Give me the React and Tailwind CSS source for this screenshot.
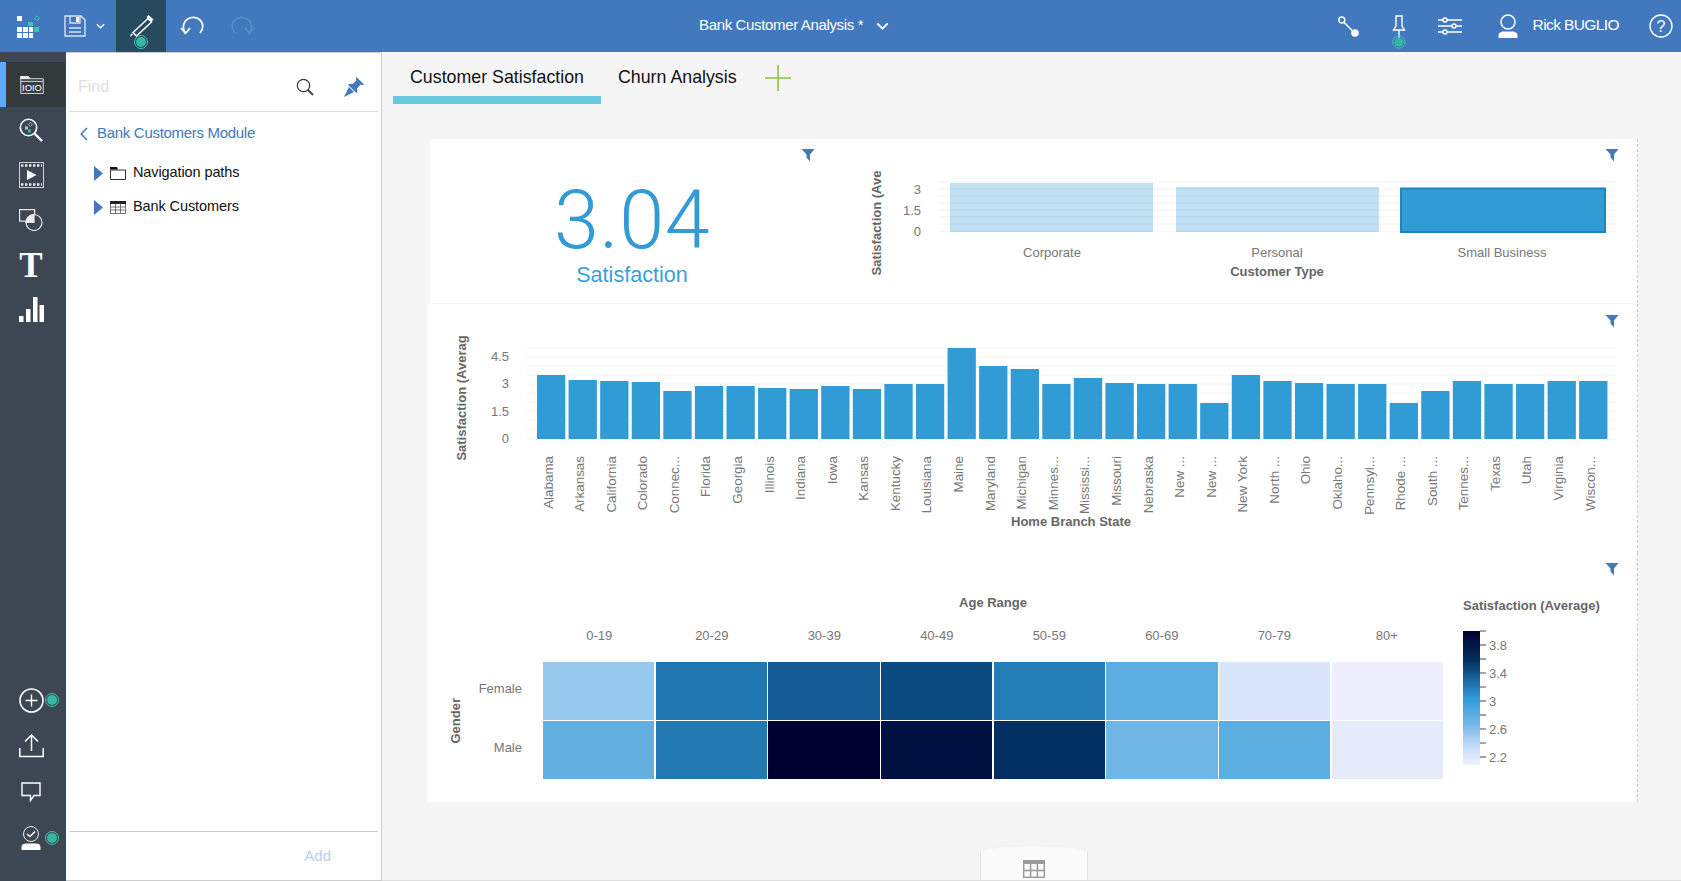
import React from "react";

const states = [
  ["Alabama", 195], ["Arkansas", 210], ["California", 213], ["Colorado", 216], ["Connec...", 243],
  ["Florida", 228], ["Georgia", 228], ["Illinois", 234], ["Indiana", 237], ["Iowa", 228],
  ["Kansas", 237], ["Kentucky", 222], ["Louisiana", 222], ["Maine", 114], ["Maryland", 168],
  ["Michigan", 177], ["Minnes...", 222], ["Mississi...", 204], ["Missouri", 219], ["Nebraska", 222],
  ["New ...", 222], ["New ...", 279], ["New York", 195], ["North ...", 213], ["Ohio", 219],
  ["Oklaho...", 222], ["Pennsyl...", 222], ["Rhode ...", 279], ["South ...", 243], ["Tennes...", 213],
  ["Texas", 222], ["Utah", 222], ["Virginia", 213], ["Wiscon...", 213],
];

const ages = ["0-19", "20-29", "30-39", "40-49", "50-59", "60-69", "70-79", "80+"];
const female = ["#97c9ee", "#2076b0", "#145c93", "#0b4a80", "#247db7", "#5caee0", "#d8e5fa", "#eeeefd"];
const male = ["#63afe0", "#2279b2", "#000030", "#001040", "#012f62", "#6fb6e4", "#5cade0", "#e6ebfc"];

function Dot({ cx = 9, cy = 9 }) {
  return (
    <g>
      <circle cx={cx} cy={cy} r="6.5" fill="none" stroke="#3fc4ad" strokeWidth="1" />
      <circle cx={cx} cy={cy} r="5" fill="#36b7a4" />
    </g>
  );
}

function Filter({ className }) {
  return (
    <svg className={`absolute ${className}`} width="14" height="14" viewBox="0 0 14 14">
      <path d="M0.5 1H13.5L9 6.5V13.5L5.5 9.5V6.5Z" fill="#4178be" />
    </svg>
  );
}

function Logo() {
  return (
    <svg width="23" height="23" viewBox="17 15 23 23">
      <g fill="#fff">
        <rect x="17" y="16" width="5" height="5" />
        <rect x="17" y="27" width="5" height="5" />
        <rect x="23" y="27" width="5" height="5" />
        <rect x="29" y="27" width="4" height="5" />
        <rect x="17" y="33" width="5" height="5" />
        <rect x="23" y="33" width="5" height="5" />
        <rect x="29" y="33" width="4" height="5" />
      </g>
      <rect x="28" y="22" width="5" height="4" fill="#3ec6ad" />
      <rect x="34" y="27" width="5" height="5" fill="#3ec6ad" />
      <path d="M37 15.8L39.4 18.2L37 20.6L34.6 18.2Z" fill="none" stroke="#3ec6ad" />
    </svg>
  );
}

function SaveIcon() {
  return (
    <svg width="22" height="22" viewBox="0 0 22 22" fill="none" stroke="#d7e3f3" strokeWidth="1.4">
      <path d="M1 1H17L21 5V21H1Z" />
      <path d="M6 1V8H16V1" />
      <rect x="12" y="2" width="3" height="5" fill="#fff" stroke="none" />
      <path d="M5 13H17M5 17H17" />
    </svg>
  );
}

function Chevron({ w = 9, h = 6, sw = 1.5 }) {
  return (
    <svg width={w} height={h} viewBox="0 0 10 6" fill="none" stroke="#fff" strokeWidth={sw}>
      <path d="M1 1L5 5L9 1" />
    </svg>
  );
}

function PencilTile() {
  return (
    <svg width="50" height="52" viewBox="0 0 50 52" fill="none">
      <path d="M17 32.5L32 18.5L35.5 22L20.5 36Z" stroke="#fff" strokeWidth="1.5" />
      <path d="M32.5 15L37.5 19.5L35.5 21.5L30.5 17Z" fill="#fff" />
      <path d="M17 34.5L14 37L15 33.5Z" fill="#fff" />
      <Dot cx={25} cy={42} />
    </svg>
  );
}

function Undo({ color = "#fff", flip }) {
  return (
    <svg width="24" height="20" viewBox="0 0 24 20" fill="none" stroke={color} strokeWidth="1.7" className={flip ? "-scale-x-100" : ""}>
      <path d="M5.5 17C3 13.5 3 9 5 5.5C8 1 15 0 19.5 3.5C24 7.5 23.5 13 20 17" />
      <path d="M1 12L5.5 17.5L10 12" />
    </svg>
  );
}

function ConnectionIcon() {
  return (
    <svg width="21" height="21" viewBox="0 0 21 21" fill="none" stroke="#fff" strokeWidth="1.5">
      <circle cx="3.8" cy="4" r="3" />
      <path d="M6 6.2L15 15.5" />
      <circle cx="17" cy="17" r="3.8" fill="#fff" stroke="none" />
    </svg>
  );
}

function PinIcon() {
  return (
    <svg width="14" height="36" viewBox="0 0 14 36" fill="none">
      <path d="M4 1H10V11L12.5 15H1.5L4 11Z" stroke="#fff" strokeWidth="1.4" />
      <path d="M7 15V25" stroke="#fff" strokeWidth="1.4" />
      <circle cx="7" cy="27" r="6.2" stroke="#3fc4ad" />
      <circle cx="7" cy="27" r="4.6" fill="#36b7a4" />
    </svg>
  );
}

function SlidersIcon() {
  return (
    <svg width="24" height="18" viewBox="0 0 24 18" fill="none" stroke="#fff" strokeWidth="1.5">
      <path d="M0 3H5M9 3H24M0 9H14M18 9H24M0 15H5M9 15H24" />
      <circle cx="7" cy="3" r="2" />
      <circle cx="16" cy="9" r="2" />
      <circle cx="7" cy="15" r="2" />
    </svg>
  );
}

function UserIcon() {
  return (
    <svg width="20" height="24" viewBox="0 0 20 24">
      <circle cx="10" cy="8" r="7" fill="none" stroke="#fff" strokeWidth="1.5" />
      <path d="M0.5 24V21.5C0.5 18.5 3 17.5 5.5 17.5H14.5C17 17.5 19.5 18.5 19.5 21.5V24Z" fill="#fff" />
    </svg>
  );
}

function HelpIcon() {
  return (
    <svg width="24" height="24" viewBox="0 0 24 24">
      <circle cx="12" cy="12" r="11" fill="none" stroke="#fff" strokeWidth="1.4" />
      <text x="12" y="17.5" textAnchor="middle" fontSize="16" fill="#fff">?</text>
    </svg>
  );
}

function DataIcon() {
  return (
    <svg width="24" height="18" viewBox="0 0 26 20" fill="none" stroke="#e4e7ea">
      <path d="M0.5 5V0.5H9L10.5 3H25.5V19.5H0.5Z" fill="#3a4145" />
      <path d="M0.5 0.5H9L10.5 3H0.5Z" fill="#fff" />
      <path d="M0.5 6H25.5" />
      <text x="13" y="16.5" textAnchor="middle" fontSize="10.5" fill="#fff" stroke="none">IOIO</text>
    </svg>
  );
}

function SearchDots() {
  return (
    <svg width="24" height="24" viewBox="0 0 24 24" fill="none">
      <circle cx="9.5" cy="9.5" r="8.2" stroke="#fff" strokeWidth="1.6" />
      <path d="M15.5 15.5L23 23" stroke="#fff" strokeWidth="2.4" />
      <rect x="6" y="8.5" width="3" height="3" fill="#bcc4cb" />
      <rect x="9" y="11.5" width="3" height="3" fill="#36b7a4" />
      <path d="M11.5 4.5L13.5 6.5L11.5 8.5L9.5 6.5Z" stroke="#bcc4cb" strokeWidth="0.8" />
    </svg>
  );
}

function FilmIcon() {
  return (
    <svg width="25" height="26" viewBox="0 0 25 26" fill="none">
      <rect x="0.5" y="0.5" width="24" height="25" stroke="#cfd3d7" />
      <path d="M2 3.5H23M2 22.5H23" stroke="#e8eaec" strokeWidth="2.4" strokeDasharray="2.4 1.6" />
      <path d="M8 8L17.5 13L8 18Z" fill="#fff" />
    </svg>
  );
}

function WidgetIcon() {
  return (
    <svg width="24" height="22" viewBox="0 0 24 22" fill="none" stroke="#e8eaec" strokeWidth="1.2">
      <rect x="0.6" y="0.6" width="15" height="11.5" />
      <circle cx="15" cy="13.5" r="8" fill="#3d4753" />
      <path d="M15 5.5V13.5H7A8 8 0 0 1 15 5.5Z" fill="#e8eaec" />
    </svg>
  );
}

function BarsIcon() {
  return (
    <svg width="25" height="25" viewBox="0 0 25 25" fill="#fff">
      <rect x="0" y="19" width="4.5" height="6" />
      <rect x="7" y="12" width="4.5" height="13" />
      <rect x="14" y="0" width="4.5" height="25" />
      <rect x="20.5" y="8" width="4.5" height="17" />
    </svg>
  );
}

function AddIcon() {
  return (
    <svg width="25" height="25" viewBox="0 0 25 25" fill="none" stroke="#fff">
      <circle cx="12.5" cy="12.5" r="11.5" strokeWidth="1.6" />
      <path d="M12.5 6.5V18.5M6.5 12.5H18.5" strokeWidth="1.4" />
    </svg>
  );
}

function UploadIcon() {
  return (
    <svg width="25" height="24" viewBox="0 0 25 24" fill="none" stroke="#fff" strokeWidth="1.5">
      <path d="M0.8 14V22.5H24.2V14" />
      <path d="M12.5 17V1.5M6 7.5L12.5 1L19 7.5" />
    </svg>
  );
}

function CommentIcon() {
  return (
    <svg width="20" height="20" viewBox="0 0 20 20" fill="none" stroke="#fff" strokeWidth="1.4">
      <path d="M1 1H19V13.5H13L9.5 18.5V13.5H1Z" />
    </svg>
  );
}

function ReviewIcon() {
  return (
    <svg width="20" height="24" viewBox="0 0 20 24" fill="none">
      <circle cx="10" cy="8" r="7.5" stroke="#e8eaec" />
      <path d="M6 8L9 10.5L14 5.5" stroke="#fff" strokeWidth="1.5" />
      <path d="M0.5 24V21C0.5 18.5 2.5 17.5 5 17.5H15C17.5 17.5 19.5 18.5 19.5 21V24Z" fill="#fff" />
    </svg>
  );
}

function SideItem({ active, h = "h-[45px]", children, dot }) {
  return (
    <div className={`relative flex items-center justify-center ${h} ${active ? "bg-[#343a3c] border-l-[6px] border-[#5aaafa] mr-px pr-[7px]" : "pr-1"}`}>
      {children}
      {dot && (
        <svg className="absolute left-[45px] top-[16px]" width="14" height="14" viewBox="2 2 14 14">
          <Dot />
        </svg>
      )}
    </div>
  );
}

function Sidebar() {
  return (
    <aside className="w-[66px] shrink-0 bg-[#3d4753] flex flex-col pt-[10px] pb-[20px]">
      <SideItem active><DataIcon /></SideItem>
      <SideItem><SearchDots /></SideItem>
      <SideItem><FilmIcon /></SideItem>
      <SideItem><WidgetIcon /></SideItem>
      <SideItem><span className="text-[35px] leading-none font-bold text-white font-['Liberation_Serif',serif] pt-[2px]">T</span></SideItem>
      <SideItem><BarsIcon /></SideItem>
      <div className="mt-auto">
        <SideItem h="h-[46px]" dot><AddIcon /></SideItem>
        <SideItem h="h-[46px]"><UploadIcon /></SideItem>
        <SideItem h="h-[46px]"><CommentIcon /></SideItem>
        <SideItem h="h-[46px]" dot><ReviewIcon /></SideItem>
      </div>
    </aside>
  );
}

function FolderIcon() {
  return (
    <svg width="16" height="13" viewBox="0 0 16 13" fill="none" stroke="#333">
      <path d="M0.5 3V12.5H15.5V3H0.5Z" />
      <path d="M0 0H7L8 2.5H0Z" fill="#111" stroke="none" />
    </svg>
  );
}

function TableIcon() {
  return (
    <svg width="16" height="13" viewBox="0 0 16 13" fill="none" stroke="#555" strokeWidth="0.8">
      <rect x="0.5" y="0.5" width="15" height="12" />
      <rect x="0" y="0" width="16" height="3" fill="#222" stroke="none" />
      <path d="M0.5 6H15.5M0.5 9H15.5M5.5 3V12.5M10.5 3V12.5" />
    </svg>
  );
}

function TreeRow({ icon, label }) {
  return (
    <div className="flex items-center h-[34px] pl-[25px]">
      <svg width="9" height="15" viewBox="0 0 9 15">
        <path d="M0 0L9 7.5L0 15Z" fill="#4178be" />
      </svg>
      <span className="ml-[7px] flex">{icon}</span>
      <span className="ml-[7px] text-[14.5px] tracking-[-0.1px] text-[#111]">{label}</span>
    </div>
  );
}

function DataPanel() {
  return (
    <section className="w-[316px] shrink-0 bg-white border-r border-b border-t border-[#ccc] flex flex-col px-[3px]">
      <div className="h-[59px] border-b border-[#ddd] flex items-center pt-[9px]">
        <span className="ml-[9px] text-[16px] text-[#dcdfe2]">Find</span>
        <svg className="ml-auto" width="18" height="18" viewBox="0 0 18 18" fill="none">
          <circle cx="7.5" cy="7.5" r="6.2" stroke="#333" strokeWidth="1.2" />
          <path d="M12 12L17 17" stroke="#444" strokeWidth="2" />
        </svg>
        <svg className="ml-[30px] mr-[14px]" width="20" height="20" viewBox="0 0 20 20" fill="#4178be">
          <path d="M12.5 0L20 7.5L18.3 8.2L16.8 7.6L13 11.5C13.7 13.5 13.3 15 12.3 16L4 7.8C5.5 6.7 7 6.4 8.6 7.1L12.5 3.2L11.8 1.7Z" />
          <path d="M5 10L10 15L0 20Z" />
        </svg>
      </div>
      <div className="flex items-center h-[43px]">
        <svg className="ml-[11px]" width="8" height="14" viewBox="0 0 8 14" fill="none" stroke="#4178be" strokeWidth="1.5">
          <path d="M7 1L1.2 7L7 13" />
        </svg>
        <span className="ml-[9px] text-[15px] tracking-[-0.3px] text-[#4178be]">Bank Customers Module</span>
      </div>
      <div className="mt-[1px]">
        <TreeRow icon={<FolderIcon />} label="Navigation paths" />
        <TreeRow icon={<TableIcon />} label="Bank Customers" />
      </div>
      <div className="mt-auto h-[49px] border-t border-[#ccc] flex items-center justify-end pr-[47px]">
        <span className="text-[15px] text-[#b8cfee]">Add</span>
      </div>
    </section>
  );
}

function CustomerTypeChart() {
  const grid = [182, 189, 196, 203, 210, 217, 224, 231];
  return (
    <svg width="806" height="164" viewBox="831 139 806 164" className="block">
      {grid.map((y) => (
        <line key={y} x1="938" x2="1616" y1={y} y2={y} stroke="#f2f2f2" />
      ))}
      <rect x="950" y="183" width="203" height="49" fill="#2d9bd8" opacity="0.3" />
      <rect x="1176" y="187" width="203" height="45" fill="#2d9bd8" opacity="0.3" />
      <rect x="1401" y="188.5" width="204" height="43.5" fill="#309bd5" stroke="#2185bd" strokeWidth="2" />
      <g fontSize="13" fill="#777" textAnchor="end">
        <text x="921" y="194">3</text>
        <text x="921" y="215">1.5</text>
        <text x="921" y="236">0</text>
      </g>
      <g fontSize="13" fill="#777" textAnchor="middle">
        <text x="1052" y="257">Corporate</text>
        <text x="1277" y="257">Personal</text>
        <text x="1502" y="257">Small Business</text>
      </g>
      <text x="1277" y="276" fontSize="13" fontWeight="700" fill="#666" textAnchor="middle">Customer Type</text>
      <text transform="rotate(-90 881 223)" x="881" y="223" fontSize="13" fontWeight="700" fill="#666" textAnchor="middle">Satisfaction (Ave</text>
    </svg>
  );
}

function StateChart() {
  const grid = [348, 357, 366, 375, 384, 393, 402, 411, 420, 429, 439];
  return (
    <svg width="1210" height="249" viewBox="427 304 1210 249" className="block">
      {grid.map((y) => (
        <line key={y} x1="526" x2="1616" y1={y} y2={y} stroke="#f2f2f2" />
      ))}
      {states.map(([name, top], i) => {
        const x = 537 + i * 31.58;
        const y = 310 + top / 3;
        return <rect key={i} x={x} y={y} width="28.3" height={439 - y} fill="#309bd5" />;
      })}
      <g fontSize="13" fill="#777" textAnchor="end">
        <text x="509" y="361">4.5</text>
        <text x="509" y="388">3</text>
        <text x="509" y="416">1.5</text>
        <text x="509" y="443">0</text>
      </g>
      <g fontSize="13.4" fill="#777" textAnchor="end">
        {states.map(([name], i) => {
          const x = 537 + i * 31.58 + 15.5;
          return (
            <text key={i} x={x} y="456" transform={`rotate(-90 ${x} 456)`}>
              {name}
            </text>
          );
        })}
      </g>
      <text x="1071" y="526" fontSize="13" fontWeight="700" fill="#666" textAnchor="middle">Home Branch State</text>
      <text x="0" y="0" transform="translate(466 398) rotate(-90)" fontSize="13" fontWeight="700" fill="#666" textAnchor="middle">Satisfaction (Averag</text>
    </svg>
  );
}

function Legend() {
  const ticks = [632, 646, 660, 674, 688, 702, 716, 730, 744, 758];
  const labels = { 646: "3.8", 674: "3.4", 702: "3", 730: "2.6", 758: "2.2" };
  return (
    <svg width="60" height="136" viewBox="1463 631 60 136" className="block mt-[16px]">
      <defs>
        <linearGradient id="legendRamp" x1="0" y1="0" x2="0" y2="1">
          <stop offset="0" stopColor="#00002f" />
          <stop offset="0.22" stopColor="#03305f" />
          <stop offset="0.4" stopColor="#1f74ae" />
          <stop offset="0.5" stopColor="#2f9bd8" />
          <stop offset="0.7" stopColor="#75b8e8" />
          <stop offset="0.86" stopColor="#c5dcf8" />
          <stop offset="1" stopColor="#f2f2ff" />
        </linearGradient>
      </defs>
      <rect x="1463" y="632" width="17" height="134" fill="url(#legendRamp)" />
      {ticks.map((y) => (
        <g key={y}>
          <line x1="1480" x2="1486" y1={y} y2={y} stroke="#666" strokeWidth="1.2" />
          {labels[y] && (
            <text x="1489" y={y + 5} fontSize="13" fill="#777">{labels[y]}</text>
          )}
        </g>
      ))}
    </svg>
  );
}

function HeatRow({ cells }) {
  return cells.map((c) => <div key={c} style={{ backgroundColor: c }} />);
}

function HeatMapCard() {
  return (
    <div className="relative h-[249px] bg-white border-r border-dashed border-[#ccc] flex text-[13px] text-[#777]">
      <Filter className="left-[1178px] top-[9px]" />
      <div className="w-[116px] flex pt-[109px]">
        <div className="w-[35px] h-[117px] flex items-center justify-end">
          <span className="[writing-mode:vertical-rl] rotate-180 font-bold text-[#666] leading-none">Gender</span>
        </div>
        <div className="w-[60px] flex flex-col items-end -mt-[2px]">
          <span className="h-[58px] flex items-center">Female</span>
          <span className="h-[59px] flex items-center">Male</span>
        </div>
      </div>
      <div className="w-[900px]">
        <div className="mt-[42px] h-[16px] leading-[16px] text-center font-bold text-[#666]">Age Range</div>
        <div className="mt-[17px] h-[16px] leading-[16px] grid grid-cols-8 text-center">
          {ages.map((a) => <span key={a}>{a}</span>)}
        </div>
        <div className="mt-[18px] h-[117px] grid grid-cols-8 grid-rows-2 gap-[1.5px]">
          <HeatRow cells={female} />
          <HeatRow cells={male} />
        </div>
      </div>
      <div className="ml-[20px] pt-[45px]">
        <div className="h-[16px] leading-[16px] font-bold text-[#666] whitespace-nowrap">Satisfaction (Average)</div>
        <Legend />
      </div>
    </div>
  );
}

function Header() {
  return (
    <header className="h-[52px] shrink-0 bg-[#4178be] flex items-center text-white">
      <div className="ml-[17px]"><Logo /></div>
      <div className="ml-[24px]"><SaveIcon /></div>
      <div className="ml-[10px]"><Chevron /></div>
      <div className="ml-[11px] w-[50px] h-full bg-[#264a60]"><PencilTile /></div>
      <div className="ml-[14px]"><Undo /></div>
      <div className="ml-[27px]"><Undo color="#5a8cc6" flip /></div>
      <div className="ml-[444px] pb-[2px] text-[15px] tracking-[-0.35px] whitespace-nowrap">Bank Customer Analysis *</div>
      <div className="ml-[13px]"><Chevron w={13} h={8} /></div>
      <div className="ml-auto flex items-center pr-[8px]">
        <ConnectionIcon />
        <div className="ml-[33px] mt-[14px]"><PinIcon /></div>
        <div className="ml-[32px]"><SlidersIcon /></div>
        <div className="ml-[36px]"><UserIcon /></div>
        <span className="ml-[15px] pb-[2px] text-[15.5px] tracking-[-0.6px] whitespace-nowrap">Rick BUGLIO</span>
        <div className="ml-[30px]"><HelpIcon /></div>
      </div>
    </header>
  );
}

function Tabs() {
  return (
    <div className="h-[52px] shrink-0 flex pl-[11px] text-[17.8px] text-[#111]">
      <div className="w-[208px] h-[52px] border-b-[8px] border-[#69c9e0] flex items-center justify-center pt-[6px]">
        Customer Satisfaction
      </div>
      <div className="ml-[17px] h-[52px] flex items-center pb-[2px]">Churn Analysis</div>
      <svg className="ml-[28px] mt-[13px]" width="26" height="26" viewBox="0 0 26 26" stroke="#8cc63f" strokeWidth="1.6">
        <path d="M13 0V26M0 13H26" />
      </svg>
    </div>
  );
}

export default function App() {
  return (
    <div className="w-[1681px] h-[881px] overflow-hidden flex flex-col bg-[#f5f5f5] font-['Liberation_Sans',sans-serif]">
      <Header />
      <div className="flex flex-1 min-h-0">
        <Sidebar />
        <DataPanel />
        <main className="flex-1 flex flex-col border-b border-[#ddd]">
          <Tabs />
          <div className="mt-[35px] pl-[45px]">
            <div className="flex ml-[3px] h-[164px] mb-px">
              <div className="relative w-[401px] bg-white flex flex-col items-center pl-[3px] pt-[40px]">
                <Filter className="left-[371px] top-[9px]" />
                <div className="font-['Roboto',sans-serif] font-light text-[81px] leading-[83px] tracking-[0.5px] text-[#349ad5]">3.04</div>
                <div className="text-[21.6px] leading-[26px] text-[#3c9fd8]">Satisfaction</div>
              </div>
              <div className="relative bg-white border-r border-dashed border-[#ccc]">
                <Filter className="left-[774px] top-[9px]" />
                <CustomerTypeChart />
              </div>
            </div>
            <div className="relative h-[249px] w-[1211px] bg-white border-r border-dashed border-[#ccc]">
              <Filter className="left-[1178px] top-[10px]" />
              <StateChart />
            </div>
            <div className="w-[1211px]">
              <HeatMapCard />
            </div>
          </div>
          <div className="mt-auto ml-[598px] w-[108px] h-[34px] bg-[#fafafa] rounded-t-[54px_6px] border-x border-[#e6e6e6] flex items-center justify-center pt-[12px]">
            <svg width="22" height="18" viewBox="0 0 22 18" fill="none" stroke="#999" strokeWidth="1.4">
              <rect x="0.7" y="0.7" width="20.6" height="16.6" />
              <rect x="0" y="0" width="22" height="4" fill="#999" stroke="none" />
              <path d="M0.7 10.5H21.3M7.6 4V17.3M14.4 4V17.3" />
            </svg>
          </div>
        </main>
      </div>
    </div>
  );
}
